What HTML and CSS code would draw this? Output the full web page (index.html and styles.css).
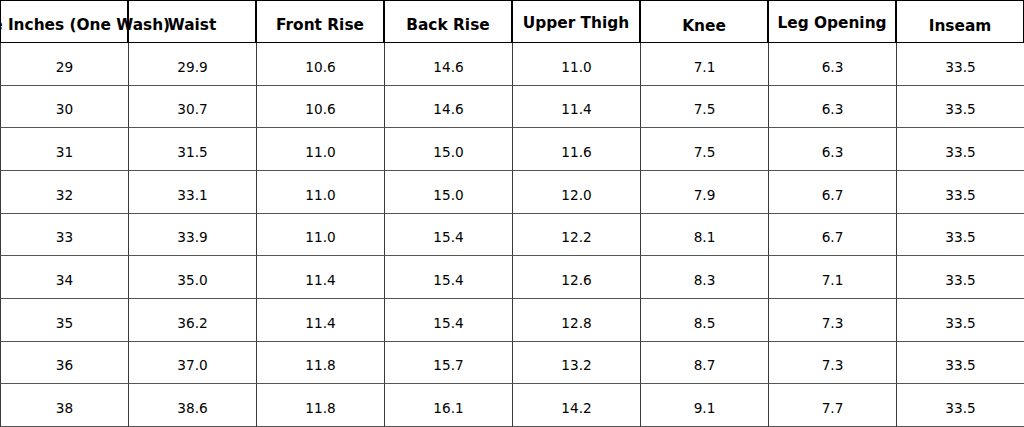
FILE: index.html
```html
<!DOCTYPE html>
<html lang="en">
<head>
<meta charset="utf-8">
<title>Size Chart</title>
<link rel="stylesheet" href="styles.css">
</head>
<body>
<div class="chart">
  <div class="row head">
    <div class="th th-first">Size Inches (One Wash)</div>
    <div class="th">Waist</div>
    <div class="th th-mid">Front Rise</div>
    <div class="th th-mid">Back Rise</div>
    <div class="th th-up">Upper Thigh</div>
    <div class="th th-low">Knee</div>
    <div class="th th-up">Leg Opening</div>
    <div class="th th-low">Inseam</div>
  </div>
  <div class="row"><div class="td">29</div><div class="td">29.9</div><div class="td">10.6</div><div class="td">14.6</div><div class="td">11.0</div><div class="td">7.1</div><div class="td">6.3</div><div class="td">33.5</div></div>
  <div class="row"><div class="td">30</div><div class="td">30.7</div><div class="td">10.6</div><div class="td">14.6</div><div class="td">11.4</div><div class="td">7.5</div><div class="td">6.3</div><div class="td">33.5</div></div>
  <div class="row"><div class="td">31</div><div class="td">31.5</div><div class="td">11.0</div><div class="td">15.0</div><div class="td">11.6</div><div class="td">7.5</div><div class="td">6.3</div><div class="td">33.5</div></div>
  <div class="row"><div class="td">32</div><div class="td">33.1</div><div class="td">11.0</div><div class="td">15.0</div><div class="td">12.0</div><div class="td">7.9</div><div class="td">6.7</div><div class="td">33.5</div></div>
  <div class="row"><div class="td">33</div><div class="td">33.9</div><div class="td">11.0</div><div class="td">15.4</div><div class="td">12.2</div><div class="td">8.1</div><div class="td">6.7</div><div class="td">33.5</div></div>
  <div class="row"><div class="td">34</div><div class="td">35.0</div><div class="td">11.4</div><div class="td">15.4</div><div class="td">12.6</div><div class="td">8.3</div><div class="td">7.1</div><div class="td">33.5</div></div>
  <div class="row"><div class="td">35</div><div class="td">36.2</div><div class="td">11.4</div><div class="td">15.4</div><div class="td">12.8</div><div class="td">8.5</div><div class="td">7.3</div><div class="td">33.5</div></div>
  <div class="row"><div class="td">36</div><div class="td">37.0</div><div class="td">11.8</div><div class="td">15.7</div><div class="td">13.2</div><div class="td">8.7</div><div class="td">7.3</div><div class="td">33.5</div></div>
  <div class="row"><div class="td">38</div><div class="td">38.6</div><div class="td">11.8</div><div class="td">16.1</div><div class="td">14.2</div><div class="td">9.1</div><div class="td">7.7</div><div class="td">33.5</div></div>
</div>
</body>
</html>
```
FILE: styles.css
```css
html, body {
  margin: 0;
  padding: 0;
  background: #fff;
}
body {
  font-family: "DejaVu Sans", sans-serif;
  color: #000;
  overflow: hidden;
}
.chart {
  width: 1024px;
}
.row {
  display: grid;
  grid-template-columns: repeat(8, 128px);
}
.th {
  box-sizing: border-box;
  height: 43px;
  border: 1px solid #000;
  display: flex;
  align-items: center;
  justify-content: center;
  white-space: nowrap;
  font-weight: bold;
  font-size: 15.36px;
  padding-top: 6.5px;
}
.th-first {
  padding-left: 9px;
}
.th-mid {
  padding-top: 7.5px;
}
.th-low {
  padding-top: 8.5px;
}
.th-up {
  padding-top: 3px;
}
.td {
  box-sizing: border-box;
  height: 42.667px;
  border-left: 1px solid #3a3a3a;
  border-bottom: 1px solid #555;
  display: flex;
  align-items: center;
  justify-content: center;
  font-size: 13.65px;
  padding-top: 6px;
}
```
